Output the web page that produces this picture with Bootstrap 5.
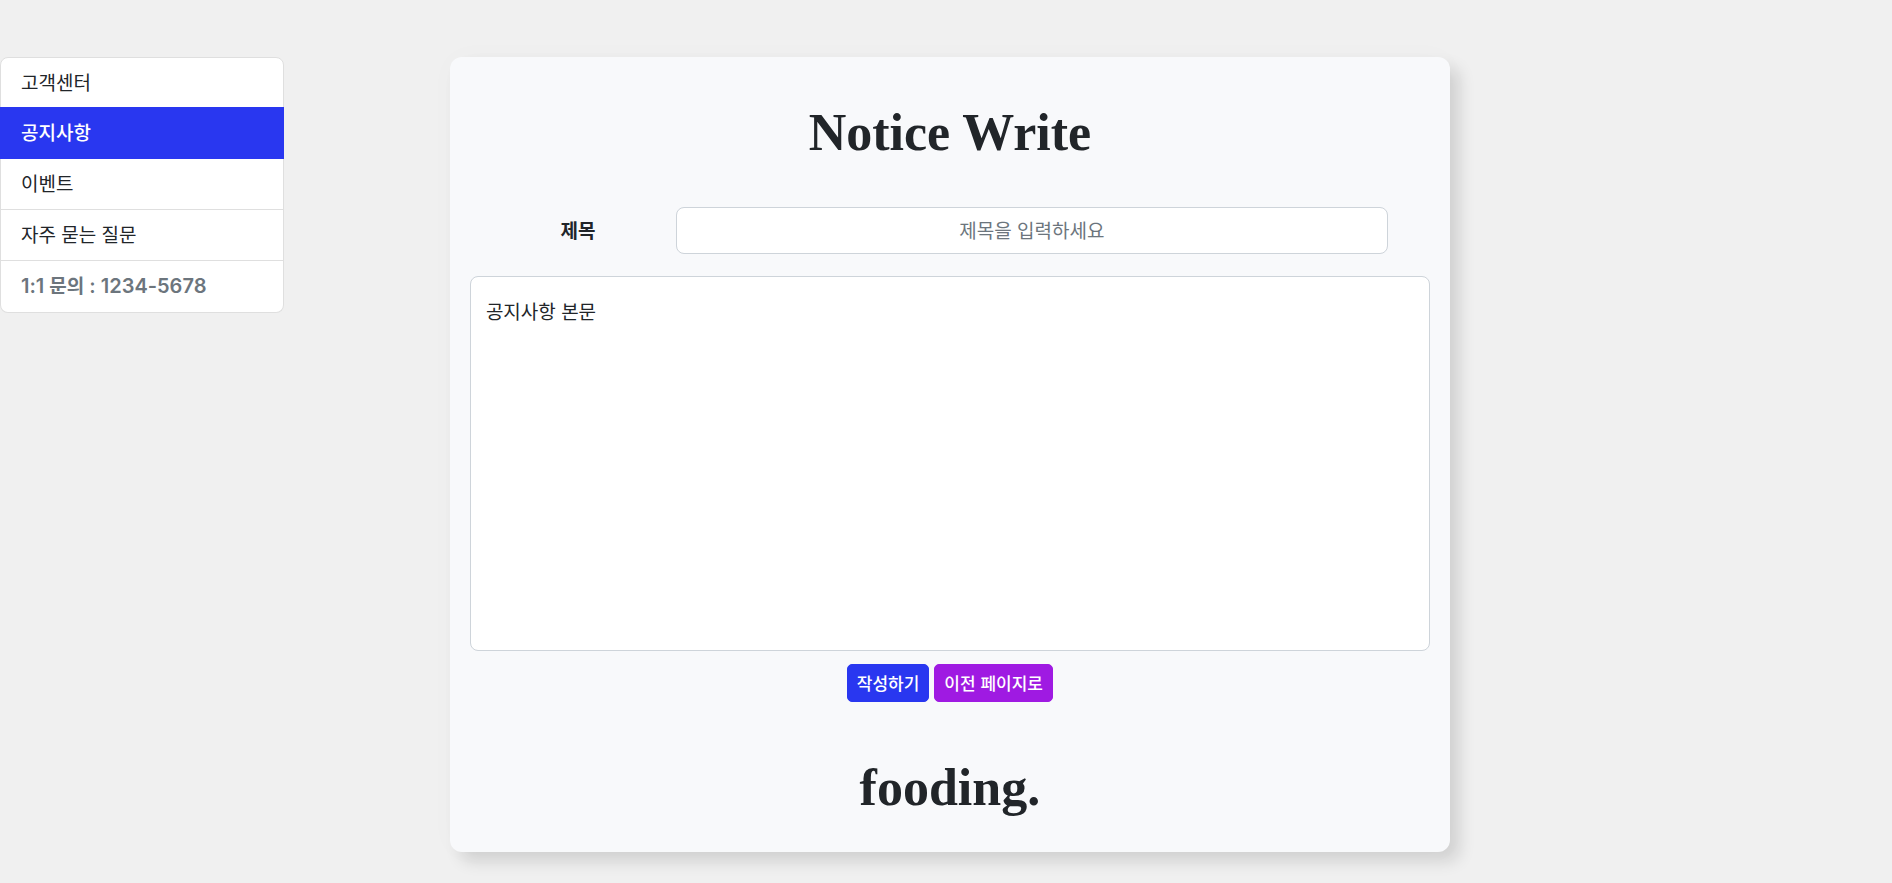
<!DOCTYPE html>
<html lang="ko">
<head>
<meta charset="utf-8">
<meta name="viewport" content="width=device-width, initial-scale=1">
<title>Notice Write</title>
<link href="https://cdn.jsdelivr.net/npm/bootstrap@5.3.0/dist/css/bootstrap.min.css" rel="stylesheet">
<style>
  html { font-size: 20px; }
  body {
    background: #f0f0f0;
    font-family: "Noto Sans CJK KR", "Noto Sans", sans-serif;
    font-size: 19px;
    line-height: 30px;
  }
  .page-grid {
    display: grid;
    grid-template-columns: 15% minmax(0, 1fr) 276px;
    align-items: start;
    padding-top: 57px;
    padding-bottom: 30px;
  }
  .side-menu {
    --bs-list-group-border-color: #dfdfdf;
    --bs-list-group-active-bg: #2937f0;
    --bs-list-group-active-border-color: #2937f0;
    --bs-list-group-border-radius: 8px;
    --bs-list-group-color: #212529;
  }
  .side-menu .list-group-item { padding: 9px 20px 11px; }
  .side-menu .list-group-item:first-child { padding-bottom: 10px; }
  .side-menu .active { font-weight: 500; }
  .side-menu .contact {
    padding: 10px 20px;
    color: #6c757d;
    font-family: Inter, "Noto Sans CJK KR", sans-serif;
    font-size: 20px;
    font-weight: 600;
  }
  .contact .hangul { font-size: 19px; }
  .write-card {
    width: 100%;
    max-width: 1000px;
    background: #f8f9fb;
    border-radius: 12px;
    box-shadow: 10px 10px 16px rgba(0, 0, 0, .12), 0 0 30px rgba(0, 0, 0, .02);
    padding: 45px 20px 33px;
  }
  .serif-title {
    font-family: "Liberation Serif", serif;
    font-size: 52px;
    line-height: 62px;
    font-weight: 700;
  }
  .title-row { margin: 43px 42px 22px 10px; }
  .title-row label { width: 196px; padding-bottom: 2px; }
  .form-control, .form-control:focus { font-size: 19px; line-height: 30px; border-color: #ced4da; border-radius: 8px; }
  .title-row .form-control { height: 47px; padding: 6px 15px 9px; }
  .title-row .form-control::placeholder { color: #6c757d; }
  .notice-body { height: 375px; padding: 19px 15px; resize: none; display: block; }
  .actions { gap: 5px; margin: 13px 0 55px; }
  .actions .btn {
    height: 38px;
    padding: 0 9px;
    font-size: 17px;
    line-height: 34px;
    font-weight: 500;
    border-radius: 5px;
    --bs-btn-color: #fff;
    --bs-btn-hover-color: #fff;
  }
  .btn-write { --bs-btn-bg: #2937f0; --bs-btn-border-color: #2937f0; --bs-btn-hover-bg: #232fcc; }
  .btn-back { --bs-btn-bg: #9f1ae2; --bs-btn-border-color: #9f1ae2; --bs-btn-hover-bg: #8716c0; }
</style>
</head>
<body>
<div class="page-grid">
  <nav class="list-group side-menu" aria-label="고객센터">
    <a href="#" class="list-group-item">고객센터</a>
    <a href="#" class="list-group-item active" aria-current="page">공지사항</a>
    <a href="#" class="list-group-item">이벤트</a>
    <a href="#" class="list-group-item">자주 묻는 질문</a>
    <span class="list-group-item contact">1:1 <span class="hangul">문의</span> : 1234-5678</span>
  </nav>
  <main class="write-card mx-auto">
    <h1 class="serif-title text-center mb-0">Notice Write</h1>
    <form>
      <div class="title-row d-flex align-items-center">
        <label for="title" class="text-center fw-bold flex-shrink-0">제목</label>
        <input type="text" id="title" class="form-control text-center" placeholder="제목을 입력하세요">
      </div>
      <textarea id="content" class="form-control notice-body" aria-label="공지사항 본문">공지사항 본문</textarea>
      <div class="actions d-flex justify-content-center">
        <button type="submit" class="btn btn-write">작성하기</button>
        <button type="button" class="btn btn-back">이전 페이지로</button>
      </div>
    </form>
    <h2 class="serif-title text-center mb-0">fooding.</h2>
  </main>
</div>
<script src="https://cdn.jsdelivr.net/npm/bootstrap@5.3.0/dist/js/bootstrap.bundle.min.js"></script>
</body>
</html>
